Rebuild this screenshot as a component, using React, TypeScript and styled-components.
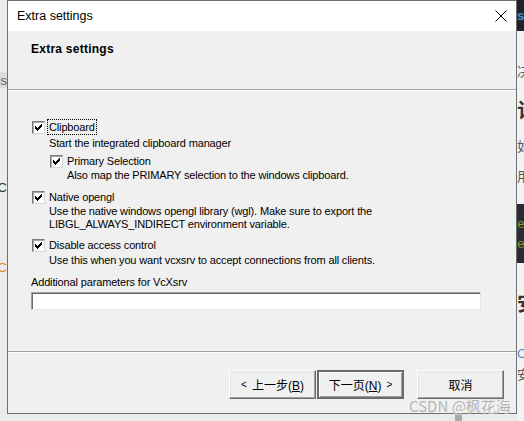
import React from 'react';
import styled, { createGlobalStyle } from 'styled-components';

const GlobalStyle = createGlobalStyle`
  html, body {
    margin: 0;
    padding: 0;
  }
  body {
    width: 524px;
    height: 421px;
    overflow: hidden;
    font-family: "Liberation Sans", "Noto Sans CJK SC", sans-serif;
  }
`

const Page = styled.div`
  position: relative;
  display: flex;
  width: 524px;
  height: 421px;
  overflow: hidden;
  background: #ececec;
`

/* bits of the web page behind the dialog */
const LeftStrip = styled.div`
  width: 7px;
  display: flex;
  flex-direction: column;
  background: #ebebeb;
`

const RightStrip = styled.div`
  width: 7px;
  display: flex;
  flex-direction: column;
  background: #f3f3f3;
`

const Fragment = styled.div<{ $mt: number; $h: number; $color?: string; $bg?: string; $size?: number; $bold?: boolean; $right?: boolean }>`
  display: flex;
  align-items: center;
  justify-content: ${p => (p.$right ? 'flex-end' : 'flex-start')};
  margin-top: ${p => p.$mt}px;
  height: ${p => p.$h}px;
  overflow: hidden;
  white-space: nowrap;
  color: ${p => p.$color || '#555'};
  background: ${p => p.$bg || 'transparent'};
  font-size: ${p => p.$size || 13}px;
  font-weight: ${p => (p.$bold ? 700 : 400)};
  font-family: "Liberation Sans", "Noto Sans CJK SC", sans-serif;
`

const TopBar = styled.div`
  height: 31px;
  display: flex;
  align-items: center;
  background: #1f2329;
  color: #4a8fd6;
  font-size: 13px;
  font-weight: 700;
  overflow: hidden;
  white-space: nowrap;
`

const CodeBlock = styled.div`
  margin-top: 21px;
  height: 59px;
  padding-top: 11px;
  box-sizing: border-box;
  background: #282c34;
  color: #8c9a2e;
  font-family: "Liberation Mono", monospace;
  font-size: 13px;
  line-height: 20px;
  overflow: hidden;
  white-space: nowrap;
`

const MiddleColumn = styled.div`
  width: 510px;
  display: flex;
  flex-direction: column;
`

const BottomGap = styled.div`
  flex: 1;
  background: #ebebeb;
  display: flex;
`

const ScrollBit = styled.div`
  margin-left: 448px;
  width: 7px;
  background: #a9a9a9;
`

/* the dialog */
const Dialog = styled.div`
  width: 510px;
  height: 414px;
  box-sizing: border-box;
  border: 1px solid #6f6f6f;
  background: #f0f0f0;
  display: flex;
  flex-direction: column;
  color: #000;
`

const TitleBar = styled.div`
  height: 30px;
  flex-shrink: 0;
  display: flex;
  align-items: center;
  justify-content: space-between;
  padding: 0 9px 0 9px;
  background: #fff;
  font-size: 12.5px;
`

const CloseButton = styled.span`
  display: flex;
  width: 12px;
  height: 12px;
`

const Header = styled.div`
  height: 58px;
  flex-shrink: 0;
  box-sizing: border-box;
  padding: 10px 0 0 23px;
  font-size: 12px;
  font-weight: 700;
  line-height: 16px;
  letter-spacing: 0.25px;
`

const Separator = styled.div`
  height: 2px;
  flex-shrink: 0;
  box-sizing: border-box;
  border-top: 1px solid #a0a0a0;
  border-bottom: 1px solid #fff;
`

const Content = styled.div`
  height: 260px;
  flex-shrink: 0;
  box-sizing: border-box;
  padding: 28px 0 0 23px;
  font-size: 11px;
  letter-spacing: -0.15px;
  display: flex;
  flex-direction: column;
`

const OptionRow = styled.div<{ $indent: number; $mt: number }>`
  display: flex;
  align-items: center;
  gap: 4px;
  height: 16px;
  margin-top: ${p => p.$mt}px;
  padding-left: ${p => p.$indent}px;
`

const Box = styled.span`
  width: 13px;
  height: 13px;
  box-sizing: border-box;
  display: flex;
  align-items: center;
  justify-content: center;
  margin-top: 1px;
  background: #fff;
  border: 1px solid;
  border-color: #7a7a7a #d8d8d8 #d8d8d8 #7a7a7a;
  box-shadow: inset 1px 1px #a8a8a8;
`

const Label = styled.span<{ $focus?: boolean }>`
  line-height: 14px;
  padding: 0 1px;
  margin-left: -1px;
  outline: ${p => (p.$focus ? '1px dotted #000' : 'none')};
`

const Desc = styled.div<{ $indent: number; $mt: number }>`
  margin-top: ${p => p.$mt}px;
  padding-left: ${p => p.$indent}px;
  line-height: 13px;
`

const Field = styled.div`
  margin-top: 3px;
  width: 450px;
  height: 18px;
  box-sizing: border-box;
  background: #fff;
  border: 1px solid;
  border-color: #a0a0a0 #e3e3e3 #e3e3e3 #a0a0a0;
  box-shadow: inset 1px 1px #696969;
`

const Footer = styled.div`
  flex: 1;
  display: flex;
  justify-content: flex-end;
  align-items: flex-start;
  padding: 17px 12px 0 0;
`

const Button = styled.button<{ $default?: boolean; $ml: number }>`
  width: 87px;
  height: 29px;
  margin-left: ${p => p.$ml}px;
  padding: 0;
  box-sizing: border-box;
  background: #f0f0f0;
  font-family: "Liberation Sans", "Noto Sans CJK SC", sans-serif;
  font-size: 12px;
  color: #000;
  border: ${p => (p.$default ? '2px solid #6c6c6c' : '1px solid')};
  border-color: ${p => (p.$default ? '#6c6c6c' : '#fff #6c6c6c #6c6c6c #fff')};
  box-shadow: ${p => (p.$default ? 'inset 1px 1px #fff, inset -1px -1px #a0a0a0' : 'inset -1px -1px #a0a0a0, inset 1px 1px #e3e3e3')};
  display: flex;
  align-items: center;
  justify-content: center;
  gap: 5px;
`

const Arrow = styled.span`
  font-size: 10px;
`

const Key = styled.span`
  text-decoration: underline;
`

const Watermark = styled.div`
  position: absolute;
  left: 409px;
  top: 395px;
  font-family: "Noto Sans CJK SC", sans-serif;
  font-size: 15px;
  color: #b3b3b3;
  text-shadow: 0 0 1px #fff;
  white-space: nowrap;
  pointer-events: none;
`

const CheckMark: React.FC = () => (
  <svg width="7" height="7" viewBox="0 0 7 7" shapeRendering="crispEdges">
    {[2, 3, 4, 3, 2, 1, 0].map((y, x) => (
      <rect key={x} x={x} y={y} width="1" height="3" fill="#000" />
    ))}
  </svg>
);

const Check: React.FC<{ label: string; indent: number; mt: number; focus?: boolean }> = ({ label, indent, mt, focus }) => (
  <OptionRow $indent={indent} $mt={mt}>
    <Box><CheckMark /></Box>
    <Label $focus={focus}>{label}</Label>
  </OptionRow>
);

const App: React.FC = () => {
  return (
    <>
      <GlobalStyle />
      <Page>
        <LeftStrip>
          <Fragment $mt={72} $h={16} $bg="#dcdcdc" $color="#666" $right>Docs</Fragment>
          <Fragment $mt={92} $h={14} $color="#333" $right>TC</Fragment>
          <Fragment $mt={66} $h={14} $color="#e08a1e" $right>C</Fragment>
        </LeftStrip>

        <MiddleColumn>
          <Dialog>
            <TitleBar>
              <span>Extra settings</span>
              <CloseButton>
                <svg width="12" height="12" viewBox="0 0 12 12">
                  <path d="M0.5 0.5 L11.5 11.5 M11.5 0.5 L0.5 11.5" stroke="#000" strokeWidth="1" />
                </svg>
              </CloseButton>
            </TitleBar>
            <Header>Extra settings</Header>
            <Separator />
            <Content>
              <Check label="Clipboard" indent={1} mt={0} focus />
              <Desc $indent={18} $mt={2}>Start the integrated clipboard manager</Desc>
              <Check label="Primary Selection" indent={19} mt={3} />
              <Desc $indent={36} $mt={0}>Also map the PRIMARY selection to the windows clipboard.</Desc>
              <Check label="Native opengl" indent={1} mt={7} />
              <Desc $indent={18} $mt={0}>
                Use the native windows opengl library (wgl). Make sure to export the
                <br />
                LIBGL_ALWAYS_INDIRECT environment variable.
              </Desc>
              <Check label="Disable access control" indent={1} mt={6} />
              <Desc $indent={18} $mt={1}>Use this when you want vcxsrv to accept connections from all clients.</Desc>
              <Desc $indent={0} $mt={9}>Additional parameters for VcXsrv</Desc>
              <Field />
            </Content>
            <Separator />
            <Footer>
              <Button $ml={0}>
                <Arrow>&lt;</Arrow>
                <span>上一步(<Key>B</Key>)</span>
              </Button>
              <Button $ml={1} $default>
                <span>下一页(<Key>N</Key>)</span>
                <Arrow>&gt;</Arrow>
              </Button>
              <Button $ml={13}>取消</Button>
            </Footer>
          </Dialog>
          <BottomGap>
            <ScrollBit />
          </BottomGap>
        </MiddleColumn>

        <RightStrip>
          <TopBar>su</TopBar>
          <Fragment $mt={31} $h={16}>决定</Fragment>
          <Fragment $mt={20} $h={22} $size={20} $bold $color="#333">记录</Fragment>
          <Fragment $mt={17} $h={16}>如果</Fragment>
          <Fragment $mt={14} $h={16}>用户</Fragment>
          <CodeBlock>
            ex
            <br />
            ex
          </CodeBlock>
          <Fragment $mt={27} $h={24} $size={20} $bold $color="#333">安装</Fragment>
          <Fragment $mt={32} $h={14} $color="#4a90c2">C</Fragment>
          <Fragment $mt={5} $h={16}>安装</Fragment>
        </RightStrip>

        <Watermark>CSDN @枫花海</Watermark>
      </Page>
    </>
  );
}

export default App;
